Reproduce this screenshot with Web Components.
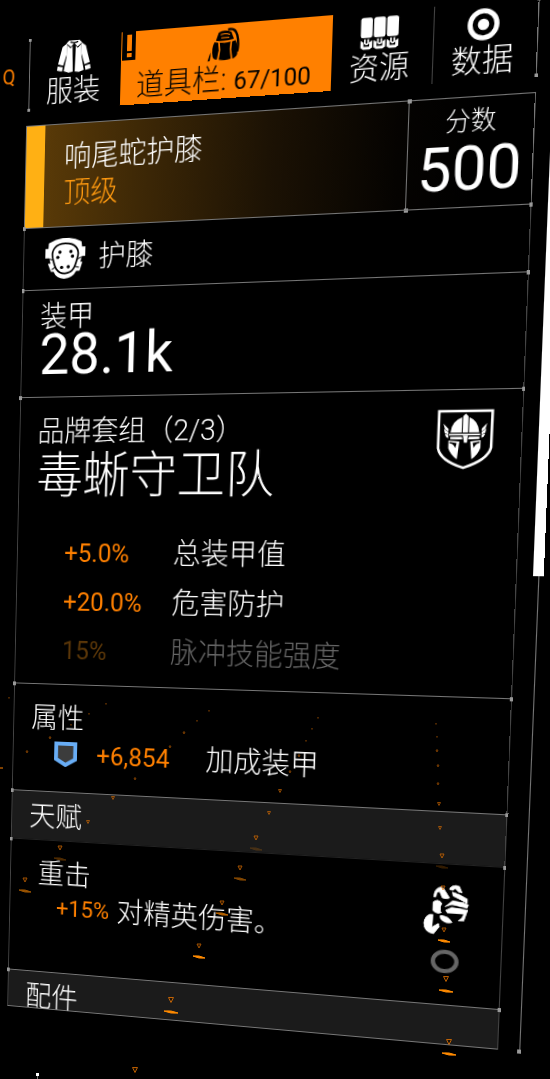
<!DOCTYPE html>
<html lang="zh-CN">
<head>
<meta charset="utf-8">
<meta name="viewport" content="width=device-width, initial-scale=1">
<title>响尾蛇护膝</title>
<style>
  :root {
    --orange: #ff8000;
    --gold: #ffb014;
    --line: #777;
    --line-dim: #444;
    --bar: #1b1b1b;
  }
  body {
    margin: 0;
    min-height: 100vh;
    overflow: hidden;
    background: #000;
    color: #fff;
    font-family: Roboto, "Noto Sans CJK SC", sans-serif;
    font-weight: 300;
  }
  small {
    font-size: 24px;
    font-weight: 400;
  }
</style>
</head>
<body>

<gear-screen>
  <gear-nav slot="nav">
    <gear-tab icon="jacket">服装</gear-tab>
    <gear-tab icon="backpack" active alert>道具栏: <small>67/100</small></gear-tab>
    <gear-tab icon="resources">资源</gear-tab>
    <gear-tab icon="data" divided>数据</gear-tab>
  </gear-nav>

  <gear-header score="500">
    响尾蛇护膝
    <span slot="quality">顶级</span>
    <span slot="score-label">分数</span>
  </gear-header>

  <gear-section kind="slot">
    <gear-icon name="kneepad"></gear-icon>
    <span>护膝</span>
  </gear-section>

  <gear-section kind="armor">
    <gear-amount value="28.1k">装甲</gear-amount>
  </gear-section>

  <gear-section kind="brand">
    <gear-brand count="（2/3）" name="毒蜥守卫队">品牌套组</gear-brand>
    <gear-stat value="+5.0%">总装甲值</gear-stat>
    <gear-stat value="+20.0%">危害防护</gear-stat>
    <gear-stat value="15%" locked>脉冲技能强度</gear-stat>
  </gear-section>

  <gear-section kind="attributes" heading="属性">
    <gear-stat value="+6,854" icon="shield">加成装甲</gear-stat>
  </gear-section>

  <gear-section kind="bar" heading="天赋"></gear-section>

  <gear-section kind="talent" heading="重击">
    <gear-stat value="+15%" inline>对精英伤害。</gear-stat>
    <gear-icon slot="aside" name="fist"></gear-icon>
    <gear-icon slot="aside" name="ring"></gear-icon>
  </gear-section>

  <gear-section kind="bar" heading="配件" last></gear-section>
</gear-screen>

<gear-sparks></gear-sparks>

<script>
const ICONS = {
  jacket: {
    box: "0 0 104 98", width: 36, height: 32,
    art: `<g fill="#fff">
      <path d="M36 0H68L76 8 62 20 52 8 42 20 28 8Z"/>
      <path d="M30 8 16 18 3 70 19 75 29 42Z M2 76 18 80 16 93 0 89Z"/>
      <path d="M74 8 88 18 101 70 85 75 75 42Z M102 76 86 80 88 93 104 89Z"/>
      <path d="M30 12 41 24 47 17 49 95 36 97 21 92 29 50Z"/>
      <path d="M74 12 63 24 57 17 55 95 68 97 83 92 75 50Z"/>
    </g>
    <path d="M40 4Q52 10 64 4" fill="none" stroke="#000" stroke-width="4"/>`
  },
  backpack: {
    box: "0 0 98 98", width: 33, height: 32,
    art: `<g fill="#000">
      <path d="M34 12Q52 4 72 12L80 34Q54 40 26 36Z"/>
      <path d="M38 42Q54 45 70 41L68 62 72 92Q54 97 36 93L40 64Z"/>
      <path d="M22 40 33 42 35 65 30 92Q20 92 17 82 12 58 22 40Z"/>
      <path d="M85 38 75 41 73 65 77 92Q88 90 91 80 94 56 85 38Z"/>
      <path d="M12 62 2 96 9 94Q12 80 10 70Z"/>
    </g>
    <path d="M62 5Q84 0 90 24T91 72" fill="none" stroke="#000" stroke-width="7"/>
    <path d="M40 19Q54 14 68 20M42 28H66" fill="none" stroke="#ff8000" stroke-width="3"/>`
  },
  resources: {
    box: "0 0 118 98", width: 38, height: 32,
    art: [0, 39, 78].map(x => `
      <rect x="${x + 2}" y="4" width="35" height="58" rx="7" fill="#fff"/>
      <path d="M${x + 2} 70 ${x + 11} 75V87H${x + 28}V75L${x + 37} 70V90L${x + 29} 96H${x + 10}L${x + 2} 90Z" fill="#fff"/>
      <path d="M${x + 15} 66V78Q${x + 20} 83 ${x + 25} 78V66" fill="none" stroke="#fff" stroke-width="5"/>
    `).join("")
  },
  data: {
    box: "0 0 96 96", width: 30, height: 30,
    art: `<circle cx="48" cy="48" r="40" fill="none" stroke="#fff" stroke-width="15"/>
      <circle cx="48" cy="48" r="17" fill="#fff"/>`
  },
  kneepad: {
    box: "0 0 120 120", width: 43, height: 41,
    art: `<path fill="#fff" d="M10 14Q60 -14 108 12L110 27H120V55H110L106 72H112L104 98H94Q84 118 58 120 34 118 26 98H18L8 74H16L12 58H0V30H9Z"/>
      <path fill="none" stroke="#000" stroke-width="5" d="M60 16C92 16 102 36 98 54C92 78 88 104 60 104C32 104 28 78 22 56C18 36 28 16 60 16Z"/>
      <path fill="none" stroke="#000" stroke-width="3" d="M12 60 24 64M108 58 96 64M20 92 32 84M102 88 88 84"/>
      <g><circle cx="44" cy="41" r="5"/><circle cx="77" cy="40" r="5"/><circle cx="38" cy="56" r="5"/>
      <circle cx="82" cy="54" r="5"/><circle cx="50" cy="86" r="5"/><circle cx="70" cy="85" r="5"/></g>`
  },
  emblem: {
    box: "0 0 172 184", width: 54, height: 58,
    art: `<path fill="none" stroke="#fff" stroke-width="8" d="M6 6H167L166 118Q156 156 84 178 14 156 6 118Z"/>
      <g fill="#fff">
        <path d="M42 71Q44 36 76 25V71Z M98 25Q126 36 129 71H98Z M79 22 87 14 95 22V71H79Z"/>
        <path d="M38 75H132V80H38Z"/>
        <path d="M80 80H95L93 102H84Z"/>
        <path d="M42 84H77L79 92H66L42 91Z M130 84H98L96 92H108L130 91Z"/>
        <path d="M37 95 70 98 64 152Q44 138 37 118Z M134 95 103 98 108 152Q128 138 134 118Z"/>
        <path d="M20 44 36 60 36 68 25 61Z M22 60 36 70V77L25 73Z M25 75 36 78V88L29 84Z"/>
        <path d="M152 44 136 60 136 68 147 61Z M150 60 136 70V77L147 73Z M147 75 136 78V88L143 84Z"/>
      </g>
      <path fill="#000" d="M40 99 62 103 58 118Q52 104 40 103Z M131 99 110 103 114 118Q120 104 131 103Z"/>`
  },
  shield: {
    box: "0 0 24 26", width: 25, height: 26,
    art: `<path d="M2 2H22V18L12 24 2 18Z" fill="#3c3c3c" stroke="#68adf5" stroke-width="4"/>`
  },
  fist: {
    box: "0 0 134 156", width: 44, height: 51,
    art: `<g fill="#fff" stroke="#fff" stroke-width="2" stroke-linejoin="round">
      <path d="M30 42C28 20 44 8 56 12L76 42Q64 48 54 42L46 24 38 28 36 40Z"/>
      <path d="M76 12Q88 -2 104 6L112 24 102 22 92 12 84 18 76 17Z"/>
      <path d="M84 24 104 30 128 42V56L110 46 86 35Z"/>
      <path d="M64 69 86 50 116 54 132 60 128 69 84 61Z"/>
      <path d="M66 80 84 70 130 75 124 87 72 87Z"/>
      <path d="M120 88 130 76 120 108 104 109 114 100Z"/>
      <path d="M28 58Q42 44 54 60 46 76 53 88 38 94 28 82Z"/>
      <path d="M50 97Q72 94 86 115 66 122 52 106Z"/>
      <path d="M20 95 29 95 27 133 46 121 49 130 32 153Q4 148 3 122 4 103 20 95Z"/>
    </g>`
  },
  ring: {
    box: "0 0 26 23", width: 27, height: 23,
    art: `<ellipse cx="13" cy="11.5" rx="11" ry="9.5" fill="none" stroke="#666" stroke-width="4"/>`
  }
}

class GearIcon extends HTMLElement {
  constructor() {
    super()
    this.attachShadow({ mode: "open" })
  }

  connectedCallback() {
    const icon = ICONS[this.getAttribute("name")]
    this.shadowRoot.innerHTML = `
      <svg viewBox="${icon.box}" width="${icon.width}" height="${icon.height}"
        preserveAspectRatio="none" aria-hidden="true">${icon.art}</svg>
      <style>
        :host { display: block; flex: none; }
        svg { display: block; }
      </style>
    `
  }
}

// The whole menu is one flat layout, tilted towards the viewer on its right side
class GearScreen extends HTMLElement {
  constructor() {
    super()
    this.attachShadow({ mode: "open" })
    this.shadowRoot.innerHTML = `
      <div class="main">
        <slot name="nav"></slot>
        <main><slot></slot></main>
      </div>
      <div class="rail"><div class="thumb"></div></div>

      <style>
        :host {
          display: flex;
          gap: 15px;
          margin: 40px -12px 0 28px;
          transform-origin: 0 0;
          transform: matrix3d(
            0.922, -0.0754, 0, -0.000163,
            -0.0216, 1.002, 0, 0.0000354,
            0, 0, 1, 0,
            0, 0, 0, 1
          );
        }
        .main {
          flex: 1;
          display: flex;
          flex-direction: column;
          gap: 16px;
        }
        main {
          display: flex;
          flex-direction: column;
        }
        .rail {
          width: 10px;
          position: relative;
          background: linear-gradient(var(--line), var(--line)) center / 1px 100% no-repeat;
        }
        .rail::after {
          content: "";
          position: absolute;
          left: 3px;
          bottom: -2px;
          width: 4px;
          height: 4px;
          background: #999;
        }
        .thumb {
          height: 54%;
          background: #fff;
        }
      </style>
    `
  }
}

class GearNav extends HTMLElement {
  constructor() {
    super()
    this.attachShadow({ mode: "open" })
    this.shadowRoot.innerHTML = `
      <nav><slot></slot></nav>
      <kbd>Q</kbd>

      <style>
        :host {
          display: block;
          position: relative;
        }
        nav {
          display: grid;
          grid-template-columns: 98fr 215fr 97fr 98fr;
          height: 70px;
          margin-left: 2px;
          border-right: 1px solid var(--line);
          border-left: 1px solid var(--line);
        }
        nav::before, nav::after {
          content: "";
          position: absolute;
          left: 1px;
          width: 3px;
          height: 73px;
          top: -1px;
          background:
            linear-gradient(#999, #999) top / 3px 3px no-repeat,
            linear-gradient(#999, #999) bottom / 3px 3px no-repeat;
        }
        nav::after {
          left: auto;
          right: -1px;
        }
        kbd {
          position: absolute;
          right: 100%;
          top: 20px;
          margin-right: 13px;
          font-family: inherit;
          font-size: 20px;
          font-weight: 400;
          line-height: 32px;
          color: var(--orange);
        }
      </style>
    `
  }
}

class GearTab extends HTMLElement {
  constructor() {
    super()
    this.attachShadow({ mode: "open" })
  }

  connectedCallback() {
    this.shadowRoot.innerHTML = `
      <button type="button">
        <span class="icon"><gear-icon name="${this.getAttribute("icon")}"></gear-icon></span>
        <span><slot></slot></span>
      </button>
      ${this.hasAttribute("alert") ? `
        <svg class="alert" viewBox="0 0 14 28" width="14" height="28" aria-hidden="true">
          <rect width="14" height="28"/>
          <path d="M5 3H10V19H5Z M5 21H10V25H5Z" fill="#ff8000"/>
        </svg>
      ` : ""}

      <style>
        :host {
          display: block;
          position: relative;
          min-width: 0;
        }
        :host([active]) {
          background: var(--orange);
          color: #000;
        }
        :host([divided]) {
          border-left: 1px solid var(--line-dim);
        }
        button {
          display: flex;
          flex-direction: column;
          align-items: center;
          gap: 2px;
          width: 100%;
          height: 100%;
          padding: 4px 4px 0 0;
          border: none;
          background: none;
          color: inherit;
          font: inherit;
          font-size: 29px;
          line-height: 32px;
          white-space: nowrap;
          cursor: pointer;
        }
        .icon {
          display: grid;
          place-items: center;
          height: 32px;
        }
        .alert {
          position: absolute;
          top: 0;
          left: 1px;
        }
      </style>
    `
  }
}

class GearHeader extends HTMLElement {
  constructor() {
    super()
    this.attachShadow({ mode: "open" })
    this.shadowRoot.innerHTML = `
      <header>
        <h1><slot></slot></h1>
        <p><slot name="quality"></slot></p>
      </header>
      <div class="score">
        <slot name="score-label"></slot>
        <output>${this.getAttribute("score")}</output>
      </div>

      <style>
        :host {
          display: flex;
          box-sizing: border-box;
          height: 103px;
          border: 1px solid var(--line);
          border-bottom: none;
          background: linear-gradient(90deg, #5e3d08, #3c2706 25%, #1c1204 50%, #050301 75%, #000 90%);
        }
        header {
          flex: 1;
          padding: 15px 0 0 21px;
          border-left: 20px solid var(--gold);
        }
        h1, p {
          margin: 0;
          font-size: 29px;
          font-weight: inherit;
          line-height: 36px;
        }
        p {
          color: #ff9a10;
        }
        .score {
          position: relative;
          display: flex;
          flex-direction: column;
          align-items: center;
          width: 117px;
          padding-top: 8px;
          border-left: 1px solid var(--line);
          font-size: 24px;
          line-height: 28px;
        }
        .score::before, .score::after {
          content: "";
          position: absolute;
          left: -2px;
          top: -2px;
          width: 4px;
          height: 4px;
          background: #999;
        }
        .score::after {
          top: auto;
          bottom: -3px;
        }
        output {
          font-size: 58px;
          font-weight: 400;
          line-height: 60px;
        }
      </style>
    `
  }
}

class GearSection extends HTMLElement {
  constructor() {
    super()
    this.attachShadow({ mode: "open" })
    const heading = this.getAttribute("heading")

    this.shadowRoot.innerHTML = `
      <section>
        ${heading ? `<h2>${heading}</h2>` : ""}
        <slot></slot>
      </section>
      <aside><slot name="aside"></slot></aside>

      <style>
        :host {
          display: flex;
          position: relative;
          box-sizing: border-box;
          border: 1px solid var(--line-dim);
          border-top-color: var(--line);
          border-bottom: none;
          font-size: 29px;
          line-height: 34px;
        }
        :host::before, :host::after {
          content: "";
          position: absolute;
          top: -2px;
          left: -2px;
          width: 3px;
          height: 4px;
          background: #999;
        }
        :host::after {
          left: auto;
          right: -2px;
        }
        section {
          flex: 1;
        }
        h2 {
          margin: 0;
          padding-left: 19px;
          font-size: 29px;
          font-weight: inherit;
        }
        :host([kind="slot"]) { height: 63px; }
        :host([kind="slot"]) section {
          display: flex;
          align-items: center;
          gap: 14px;
          padding-left: 23px;
        }
        :host([kind="armor"]) { height: 109px; }
        :host([kind="armor"]) section { padding: 10px 0 0 19px; }
        :host([kind="brand"]) { height: 295px; }
        :host([kind="attributes"]) {
          height: 112px;
          padding-top: 18px;
        }
        :host([kind="bar"]) {
          height: 51px;
          padding-top: 9px;
          background: var(--bar);
        }
        :host([kind="talent"]) {
          height: 139px;
          padding-top: 18px;
          border-top-color: #222;
        }
        :host([kind="talent"]) h2 { padding-left: 30px; }
        :host([last]) {
          height: 40px;
          padding-top: 9px;
          border-bottom: 1px solid var(--line);
        }
        aside {
          display: none;
        }
        :host([kind="talent"]) aside {
          display: flex;
          flex-direction: column;
          align-items: center;
          gap: 14px;
          padding: 1px 32px 0 0;
        }
      </style>
    `
  }
}

class GearAmount extends HTMLElement {
  constructor() {
    super()
    this.attachShadow({ mode: "open" })
    this.shadowRoot.innerHTML = `
      <slot></slot>
      <output>${this.getAttribute("value")}</output>

      <style>
        :host {
          display: flex;
          flex-direction: column;
        }
        output {
          font-size: 58px;
          font-weight: 400;
          line-height: 42px;
        }
      </style>
    `
  }
}

class GearBrand extends HTMLElement {
  constructor() {
    super()
    this.attachShadow({ mode: "open" })
    this.shadowRoot.innerHTML = `
      <div>
        <p><slot></slot>${this.getAttribute("count")}</p>
        <h2>${this.getAttribute("name")}</h2>
      </div>
      <gear-icon name="emblem"></gear-icon>

      <style>
        :host {
          display: flex;
          justify-content: space-between;
          align-items: flex-start;
          padding: 18px 26px 26px 19px;
        }
        p, h2 {
          margin: 0;
          font-weight: inherit;
        }
        h2 {
          font-size: 50px;
          line-height: 56px;
        }
      </style>
    `
  }
}

class GearStat extends HTMLElement {
  constructor() {
    super()
    this.attachShadow({ mode: "open" })
    const icon = this.getAttribute("icon")

    this.shadowRoot.innerHTML = `
      <span class="value">${this.getAttribute("value")}</span>
      <span class="label"><slot></slot></span>
      ${icon ? `<gear-icon name="${icon}"></gear-icon>` : ""}

      <style>
        :host {
          display: grid;
          grid-template-columns: 116px 1fr;
          align-items: center;
          height: 50px;
          padding-left: 51px;
          font-size: 29px;
          line-height: 36px;
        }
        .value {
          color: var(--orange);
          font-size: 26px;
          font-weight: 400;
        }
        :host([locked]) { color: #666; }
        :host([locked]) .value { color: #5a3608; }
        :host([icon]) {
          grid-template-columns: 32px 116px 1fr;
          column-gap: 7px;
          height: 40px;
          padding-left: 45px;
        }
        gear-icon { order: -1; }
        :host([icon]) .value { padding-left: 7px; }
        :host([inline]) {
          grid-template-columns: 66px 1fr;
          height: 34px;
        }
        :host([inline]) .value { font-size: 24px; }
      </style>
    `
  }
}

// Drifting embers: x, y, size of the triangle, and the brightness of its reflection
const SPARKS = [
  [9, 698, 1, 0], [106, 704, 1, 0], [89, 714, 1, 0], [71, 725, 1, 0], [50, 738, 2, 0],
  [27, 752, 2, 0], [209, 711, 1, 0], [197, 721, 1, 0], [184, 733, 2, 0], [170, 747, 2, 0],
  [135, 779, 2, 0], [113, 798, 3, 0], [88, 822, 3, 0], [60, 848, 4, 0.3], [25, 880, 4, 0.6],
  [318, 718, 1, 0], [312, 729, 1, 0], [306, 741, 1, 0], [299, 756, 2, 0], [290, 772, 2, 0],
  [280, 791, 3, 0], [269, 813, 3, 0], [256, 838, 4, 0.2], [240, 868, 4, 0.5], [222, 903, 4, 0.7],
  [199, 946, 4, 1], [171, 1000, 5, 1], [135, 1070, 5, 0],
  [436, 724, 1, 0], [437, 737, 1, 0], [437, 751, 2, 0], [438, 766, 2, 0], [438, 784, 2, 0],
  [439, 804, 3, 0], [440, 828, 3, 0], [442, 856, 4, 0.2], [443, 888, 4, 0],
  [444, 930, 4, 1], [446, 979, 5, 1], [449, 1042, 5, 1]
]

class GearSparks extends HTMLElement {
  constructor() {
    super()
    this.attachShadow({ mode: "open" })
    this.shadowRoot.innerHTML = `
      <svg width="550" height="1079" aria-hidden="true">
        ${SPARKS.map(([x, y, size, glow]) => `
          <path d="M${x - size / 2} ${y - size / 2}h${size}l${-size / 2} ${size}z"
            fill="#201000" stroke="#ff8000" opacity="${0.3 + size / 12}"/>
          ${glow ? `<path d="M${x - size - 2} ${y + size + 6}q${size + 2} -1 ${size * 2 + 4} 2q${-size - 2} 1 ${-size * 2 - 4} -2z"
            fill="#ff8a00" stroke="#ff8a00" opacity="${glow}"/>` : ""}
        `).join("")}
        <path d="M0 768h3" stroke="#ff8000"/>
        <path d="M36 1073h3v3h-3z" fill="#fff"/>
        <path d="M37 1076h1v3h-1z" fill="#777"/>
      </svg>

      <style>
        :host {
          position: absolute;
          top: 0;
          left: 0;
          pointer-events: none;
        }
        svg { display: block; }
      </style>
    `
  }
}

customElements.define("gear-icon", GearIcon)
customElements.define("gear-screen", GearScreen)
customElements.define("gear-nav", GearNav)
customElements.define("gear-tab", GearTab)
customElements.define("gear-header", GearHeader)
customElements.define("gear-section", GearSection)
customElements.define("gear-amount", GearAmount)
customElements.define("gear-brand", GearBrand)
customElements.define("gear-stat", GearStat)
customElements.define("gear-sparks", GearSparks)
</script>
</body>
</html>
